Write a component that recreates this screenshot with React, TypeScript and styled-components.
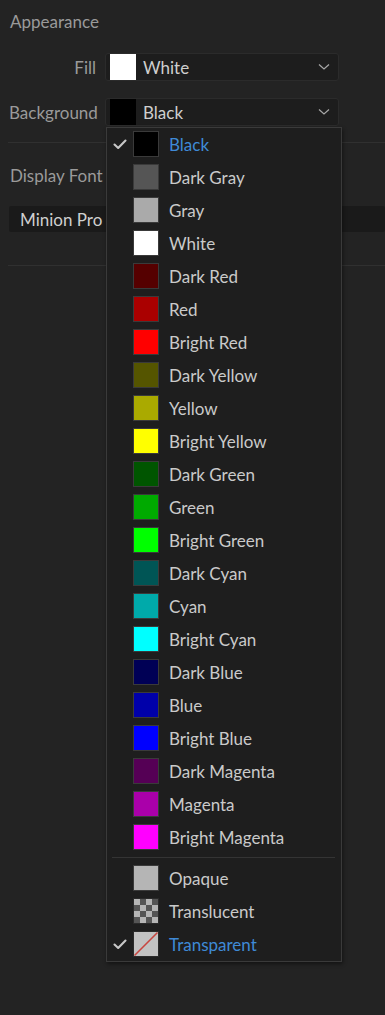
import React from "react";
import styled, { createGlobalStyle } from "styled-components";

const Global = createGlobalStyle`
  html, body { margin: 0; padding: 0; background: #232323; }
  body { font-family: "Lato", "Open Sans", sans-serif; -webkit-font-smoothing: antialiased; }
  #root { min-height: 1015px; }
`;

const Panel = styled.div`
  position: relative;
  width: 385px;
  height: 1015px;
  background: #232323;
  overflow: hidden;
  padding: 12px 0 0 0;
  box-sizing: border-box;
`;

const SectionTitle = styled.div`
  color: #9a9a9a;
  font-size: 17px;
  line-height: 20px;
  padding-left: 10px;
`;

const FieldRows = styled.div`
  display: flex;
  flex-direction: column;
  gap: 17px;
  margin-top: 21px;
`;

const Row = styled.div`
  display: flex;
  align-items: center;
  gap: 9px;
`;

const Label = styled.div`
  width: 87px;
  margin-left: 9px;
  text-align: right;
  color: #9a9a9a;
  font-size: 17px;
  white-space: nowrap;
`;

const Dropdown = styled.div`
  position: relative;
  width: 234px;
  height: 28px;
  box-sizing: border-box;
  background: #1d1d1d;
  border: 1px solid #2b2b2b;
  border-radius: 3px;
  display: flex;
  align-items: center;
  gap: 7px;
  padding-left: 4px;
`;

const Swatch = styled.div<{ $c: string; $bordered?: boolean }>`
  width: 26px;
  height: 26px;
  box-sizing: border-box;
  flex: none;
  background: ${(p) => p.$c};
  border: 1px solid ${(p) => (p.$bordered ? "#3a3a3a" : "transparent")};
`;

const DropText = styled.div`
  flex: 1;
  color: #cfcfcf;
  font-size: 17px;
`;

const Chevron = styled.svg`
  width: 12px;
  height: 8px;
  margin-right: 8px;
`;

const Divider = styled.div<{ $top: number }>`
  height: 1px;
  background: #303030;
  margin: ${(p) => p.$top}px 0 0 8px;
`;

const FontLabel = styled.div`
  color: #9a9a9a;
  font-size: 17px;
  line-height: 20px;
  padding-left: 10px;
  margin-top: 23px;
`;

const FontBox = styled.div`
  margin: 20px 0 0 9px;
  height: 26px;
  background: #1a1a1a;
  border-radius: 2px;
  display: flex;
  align-items: center;
  padding-left: 11px;
  color: #cfcfcf;
  font-size: 17px;
`;

const Menu = styled.div`
  position: absolute;
  left: 106px;
  top: 127px;
  width: 236px;
  box-sizing: border-box;
  background: #1e1e1e;
  border: 1px solid #3a3a3a;
  box-shadow: 1px 2px 4px rgba(0, 0, 0, 0.45);
  padding: 0 0 0 0;
  display: flex;
  flex-direction: column;
`;

const Item = styled.div<{ $selected?: boolean }>`
  height: 33px;
  display: flex;
  align-items: center;
  padding-left: 6px;
  color: ${(p) => (p.$selected ? "#3f8ad6" : "#cacaca")};
  font-size: 17px;
  padding-bottom: 1px;
  box-sizing: border-box;
`;

const CheckSlot = styled.div`
  width: 14px;
  height: 12px;
  margin-right: 6px;
  display: flex;
  align-items: center;
`;

const ItemText = styled.span`
  margin-left: 10px;
`;

const MenuSep = styled.div`
  height: 1px;
  background: #343434;
  margin: 3px 6px 4px 5px;
`;

const Checker = styled.div`
  width: 26px;
  height: 26px;
  flex: none;
  box-sizing: border-box;
  border: 1px solid #2a2a2a;
  background-color: #b5b5b5;
  background-image:
    linear-gradient(45deg, #555 25%, transparent 25%, transparent 75%, #555 75%),
    linear-gradient(45deg, #555 25%, transparent 25%, transparent 75%, #555 75%);
  background-size: 12px 12px;
  background-position: 0 0, 6px 6px;
`;

const TransparentSwatch = styled.svg`
  width: 26px;
  height: 26px;
  flex: none;
`;

const Check = () => (
  <svg width="14" height="11" viewBox="0 0 14 11">
    <polyline points="1.5,5.5 5.2,9 12.5,1.5" fill="none" stroke="#c8c8c8" strokeWidth="2.1" strokeLinecap="round" strokeLinejoin="round" />
  </svg>
);

const ChevronIcon = () => (
  <Chevron viewBox="0 0 12 8">
    <polyline points="1,1.5 6,6 11,1.5" fill="none" stroke="#a8a8a8" strokeWidth="1.2" />
  </Chevron>
);

const colors: [string, string][] = [
  ["Black", "#000000"],
  ["Dark Gray", "#555555"],
  ["Gray", "#aaaaaa"],
  ["White", "#ffffff"],
  ["Dark Red", "#550000"],
  ["Red", "#aa0000"],
  ["Bright Red", "#ff0000"],
  ["Dark Yellow", "#555500"],
  ["Yellow", "#aaaa00"],
  ["Bright Yellow", "#ffff00"],
  ["Dark Green", "#005500"],
  ["Green", "#00aa00"],
  ["Bright Green", "#00ff00"],
  ["Dark Cyan", "#005555"],
  ["Cyan", "#00aaaa"],
  ["Bright Cyan", "#00ffff"],
  ["Dark Blue", "#000055"],
  ["Blue", "#0000aa"],
  ["Bright Blue", "#0000ff"],
  ["Dark Magenta", "#550055"],
  ["Magenta", "#aa00aa"],
  ["Bright Magenta", "#ff00ff"],
];

export default function App() {
  return (
    <Panel>
      <Global />
      <SectionTitle>Appearance</SectionTitle>
      <FieldRows>
        <Row>
          <Label>Fill</Label>
          <Dropdown>
            <Swatch $c="#ffffff" />
            <DropText>White</DropText>
            <ChevronIcon />
          </Dropdown>
        </Row>
        <Row>
          <Label>Background</Label>
          <Dropdown>
            <Swatch $c="#000000" />
            <DropText>Black</DropText>
            <ChevronIcon />
          </Dropdown>
        </Row>
      </FieldRows>
      <Divider $top={16} />
      <FontLabel>Display Font</FontLabel>
      <FontBox>Minion Pro</FontBox>
      <Divider $top={33} />

      <Menu>
        {colors.map(([name, c], i) => (
          <Item key={name} $selected={i === 0}>
            <CheckSlot>{i === 0 && <Check />}</CheckSlot>
            <Swatch $c={c} $bordered />
            <ItemText>{name}</ItemText>
          </Item>
        ))}
        <MenuSep />
        <Item>
          <CheckSlot />
          <Swatch $c="#b5b5b5" $bordered />
          <ItemText>Opaque</ItemText>
        </Item>
        <Item>
          <CheckSlot />
          <Checker />
          <ItemText>Translucent</ItemText>
        </Item>
        <Item $selected>
          <CheckSlot>
            <Check />
          </CheckSlot>
          <TransparentSwatch viewBox="0 0 26 26">
            <rect x="0.5" y="0.5" width="25" height="25" fill="#c2c2c2" stroke="#2a2a2a" />
            <line x1="1.5" y1="24.5" x2="24.5" y2="1.5" stroke="#c8453f" strokeWidth="1.6" />
          </TransparentSwatch>
          <ItemText>Transparent</ItemText>
        </Item>
      </Menu>
    </Panel>
  );
}
